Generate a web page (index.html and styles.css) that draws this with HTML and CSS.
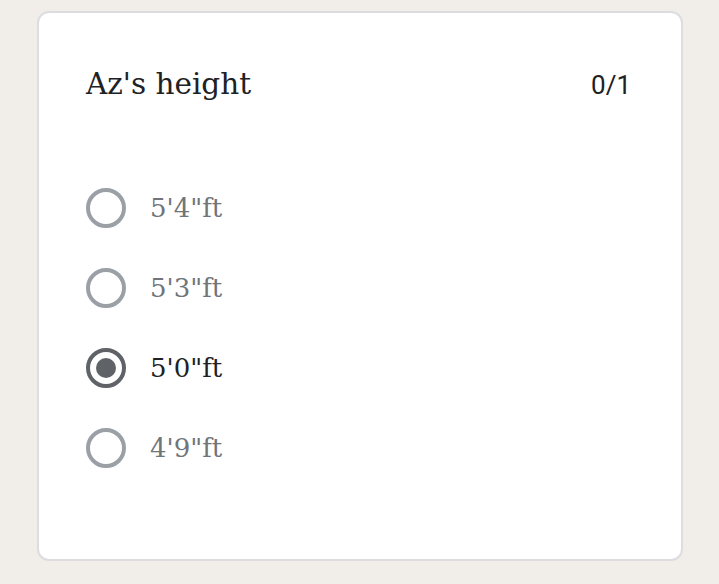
FILE: index.html
```html
<!DOCTYPE html>
<html>
<head>
<meta charset="utf-8">
<link rel="stylesheet" href="styles.css">
</head>
<body>
<div class="card">
  <div class="header">
    <div class="title">Az's height</div>
    <div class="score">0/1</div>
  </div>
  <div class="options">
    <div class="option"><span class="radio"></span><span class="label">5'4"ft</span></div>
    <div class="option"><span class="radio"></span><span class="label">5'3"ft</span></div>
    <div class="option selected"><span class="radio"></span><span class="label">5'0"ft</span></div>
    <div class="option"><span class="radio"></span><span class="label">4'9"ft</span></div>
  </div>
</div>
</body>
</html>
```
FILE: styles.css
```css
html, body { margin: 0; padding: 0; }
body {
  background: #f1ede8;
  width: 719px;
  height: 584px;
  overflow: hidden;
}
.card {
  box-sizing: border-box;
  margin: 11px 0 0 37px;
  width: 646px;
  height: 550px;
  background: #fff;
  border: 2px solid #dddce1;
  border-radius: 12px;
  padding: 49px 50px 0 47px;
}
.header {
  display: flex;
  justify-content: space-between;
  align-items: baseline;
  height: 60px;
}
.title {
  font-family: "DejaVu Serif", serif;
  font-size: 29.5px;
  color: #202124;
  line-height: 44px;
}
.score {
  font-family: Roboto, sans-serif;
  font-size: 26px;
  color: #202124;
}
.options {
  display: flex;
  flex-direction: column;
  margin-top: 46px;
}
.option {
  display: flex;
  align-items: center;
  height: 80px;
}
.radio {
  box-sizing: border-box;
  width: 40px;
  height: 40px;
  border: 4px solid #9aa0a6;
  border-radius: 50%;
  margin-right: 24px;
  position: relative;
}
.label {
  font-family: "DejaVu Serif", serif;
  font-size: 26px;
  color: #70757a;
}
.selected .radio {
  border-color: #5f6368;
}
.selected .radio::after {
  content: "";
  position: absolute;
  left: 6px;
  top: 6px;
  width: 20px;
  height: 20px;
  border-radius: 50%;
  background: #5f6368;
}
.selected .label {
  color: #202124;
}
```
